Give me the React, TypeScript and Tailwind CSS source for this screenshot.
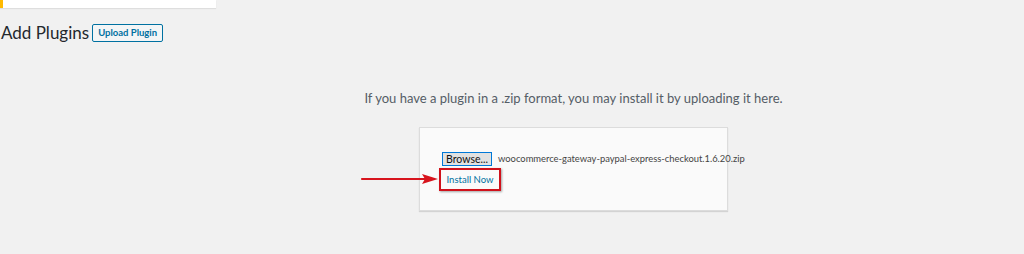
export default function App() {
  return (
    <div
      className="relative w-[1024px] h-[254px] overflow-hidden bg-[#f1f1f1] text-[#23282d]"
      style={{ fontFamily: 'Lato, "Open Sans", Arial, sans-serif' }}
    >
      {/* notice stub */}
      <div className="w-[216px] h-[8px] bg-white border-l-[3px] border-[#ffb900] shadow-[0_1px_1px_rgba(0,0,0,0.08)]" />

      {/* heading */}
      <div className="flex items-center gap-[3px] mt-[16px] pl-[1px]">
        <h1 className="text-[17px] leading-[18px] font-normal text-[#23282d]">Add Plugins</h1>
        <button className="h-[18px] px-[5px] border border-[#0071a1] rounded-[2px] bg-[#f3f5f6] text-[#0071a1] text-[9.5px] font-bold leading-none">
          Upload Plugin
        </button>
      </div>

      {/* upload area */}
      <div className="pl-[123px] flex flex-col items-center">
        <p className="mt-[46px] text-[13px] leading-[20px] text-[#555d66]">
          If you have a plugin in a .zip format, you may install it by uploading it here.
        </p>
        <div className="mt-[19px] w-[309px] h-[84px] bg-[#fafafa] border border-[#dcdcdc] shadow-[0_1px_1px_rgba(0,0,0,0.12)] pl-[22px] pt-[24px]">
          <div className="flex items-center gap-[6px]">
            <span className="shrink-0 h-[14px] w-[50px] flex items-center justify-center border border-[#0078d7] bg-[#e1e1e1] text-[10.5px] text-[#111] leading-none">
              Browse...
            </span>
            <span className="text-[9.4px] text-[#444] leading-none whitespace-nowrap">
              woocommerce-gateway-paypal-express-checkout.1.6.20.zip
            </span>
          </div>
          <div className="mt-[2px] -ml-[3px] w-[62px] h-[23px] border-[2px] border-[#d0111b] shadow-[1px_1px_2px_rgba(0,0,0,0.35)] flex items-center justify-center">
            <span className="text-[9.5px] text-[#0071a1] leading-none">Install Now</span>
          </div>
        </div>
      </div>

      {/* arrow annotation */}
      <svg className="absolute left-[360px] top-[172px]" width="80" height="14" viewBox="0 0 80 14">
        <line x1="2" y1="7" x2="66" y2="7" stroke="#d7141d" strokeWidth="2.2" strokeLinecap="round" />
        <polygon points="62,2 78,7 62,12 65,7" fill="#d7141d" />
      </svg>
    </div>
  );
}
